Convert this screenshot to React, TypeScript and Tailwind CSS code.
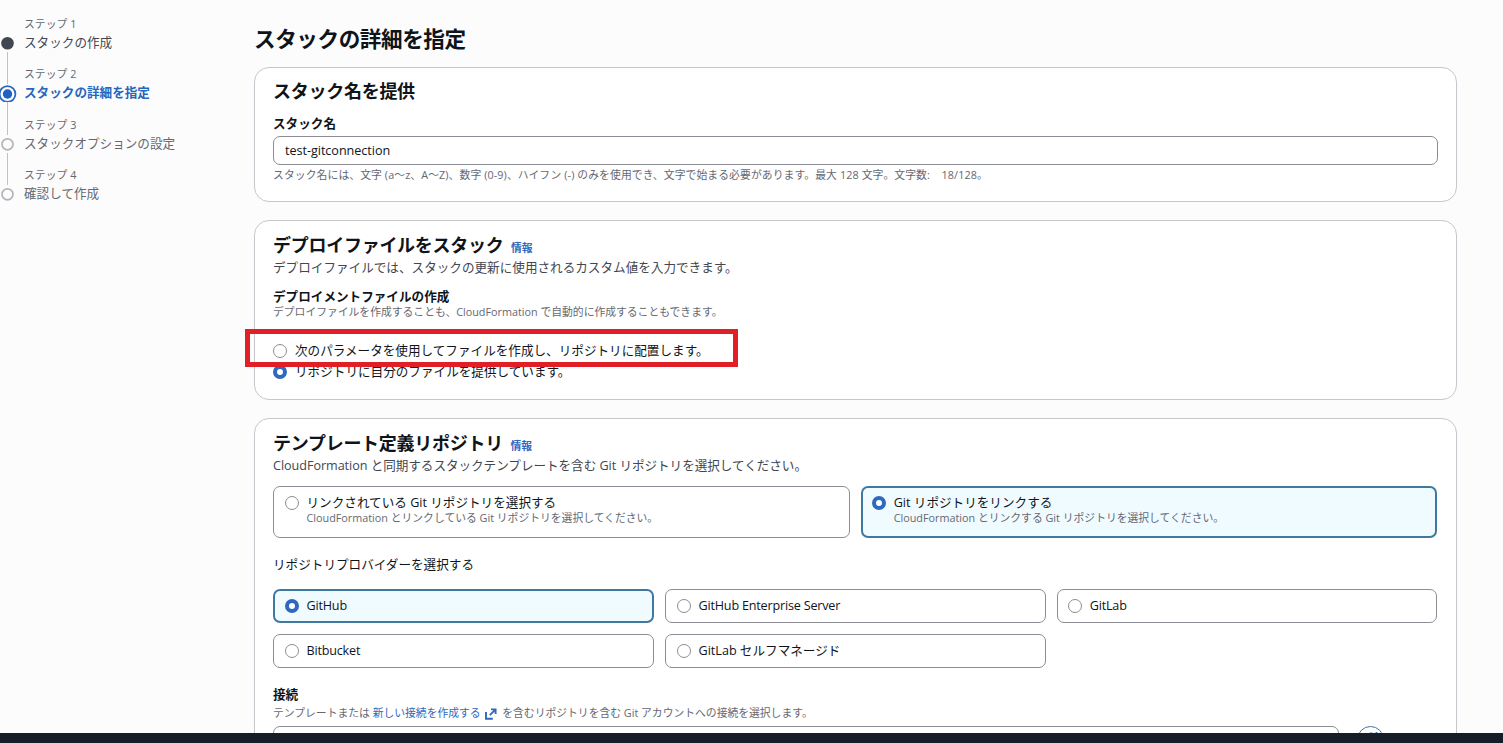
import type { ReactNode } from "react";

function Radio({ checked = false }: { checked?: boolean }) {
  return checked ? (
    <span className="size-[14px] shrink-0 rounded-full border-[4px] border-[#2f69bd] bg-white" />
  ) : (
    <span className="size-[14px] shrink-0 rounded-full border border-[#8c8c94] bg-white" />
  );
}

function Card({ className, children }: { className: string; children: ReactNode }) {
  return (
    <section className={`w-[1203px] shrink-0 rounded-[15px] border border-[#c6c6cd] bg-white pl-[18px] pr-[18px] ${className}`}>
      {children}
    </section>
  );
}

function Title({ children, info = false }: { children: ReactNode; info?: boolean }) {
  return (
    <div className="flex h-[22px] items-baseline gap-[7.5px]">
      <h2 className="text-[18px] font-bold leading-[22px] tracking-[-0.015em]">{children}</h2>
      {info && (
        <a href="#" className="text-[10.8px] font-bold leading-[14px] text-[#2f69bd]">
          情報
        </a>
      )}
    </div>
  );
}

function Hint({ children, className = "" }: { children: ReactNode; className?: string }) {
  return <p className={`text-[10.8px] leading-[14px] text-[#656871] ${className}`}>{children}</p>;
}

type TileProps = { label: string; hint?: string; checked?: boolean; latin?: boolean; tight?: boolean };

function Tile({ label, hint, checked = false, latin = false, tight = false }: TileProps) {
  return (
    <label
      className={
        checked
          ? "block rounded-[7px] border-2 border-[#3f799f] bg-[#f0fbff] pl-[9.5px] pt-[6px]"
          : "block rounded-[7px] border border-[#8c8c94] bg-white pl-[10.5px] pt-[7px]"
      }
    >
      <span className={tight ? "-ml-[0.8px] flex items-start gap-[8px]" : "flex items-start gap-[8px]"}>
        <span className="flex pt-[2px]">
          <Radio checked={checked} />
        </span>
        <span className="block">
          <span className={latin ? "block leading-[18px] tracking-[-0.19px]" : "block leading-[18px]"}>{label}</span>
          {hint && <Hint className="-mt-px">{hint}</Hint>}
        </span>
      </span>
    </label>
  );
}

const steps = [
  { title: "スタックの作成", state: "done" },
  { title: "スタックの詳細を指定", state: "active" },
  { title: "スタックオプションの設定", state: "next" },
  { title: "確認して作成", state: "next" },
];

function StepMarker({ state }: { state: string }) {
  return (
    <svg className="block size-[18px] shrink-0" viewBox="0 0 18 18" fill="none">
      {state === "done" && <circle cx="8.5" cy="9.3" r="6.3" fill="#424650" />}
      {state === "active" && (
        <>
          <circle cx="8.5" cy="10" r="7.9" stroke="#2f69bd" strokeWidth="1.8" />
          <circle cx="8.5" cy="10" r="4.7" fill="#1f61c4" />
        </>
      )}
      {state === "next" && <circle cx="8.5" cy="9.3" r="5.5" stroke="#b4b4bb" strokeWidth="1.7" />}
    </svg>
  );
}

function Steps() {
  return (
    <ol className="w-[254px] shrink-0 pt-[17px]">
      {steps.map((step, i) => (
        <li key={step.title} className="flex h-[50.3px]">
          <div className="-ml-[2px] flex w-[19px] shrink-0 flex-col items-center pt-[17px]">
            <StepMarker state={step.state} />
            {i < steps.length - 1 && <div className="-mb-[17px] w-px flex-1 bg-[#c0c0c7]" />}
          </div>
          <div className="pl-[7px]">
            <div className="text-[10.8px] leading-[14px] tracking-[0.005em] text-[#656871]">ステップ {i + 1}</div>
            <div
              className={
                step.state === "active"
                  ? "mt-[3px] font-bold leading-[18px] text-[#2467bd]"
                  : step.state === "done"
                    ? "mt-[3px] leading-[18px] text-[#424650]"
                    : "mt-[3px] leading-[18px] text-[#656871]"
              }
            >
              {step.title}
            </div>
          </div>
        </li>
      ))}
    </ol>
  );
}

export default function App() {
  return (
    <div className="flex h-[743px] w-[1503px] flex-col overflow-hidden bg-[#fcfcfd] font-['Open_Sans','Noto_Sans_CJK_JP',sans-serif] text-[12.6px] text-[#0f141a]" lang="ja">
      <div className="flex h-[733px] shrink-0 overflow-hidden">
        <Steps />
        <main className="flex flex-col gap-[18px]">
          <h1 className="-mb-[18px] h-[67px] shrink-0 pt-[25px] text-[21.6px] font-bold leading-[27px] tracking-[-0.02em]">
            スタックの詳細を指定
          </h1>

          <Card className="h-[135px] pt-[12px]">
            <Title>スタック名を提供</Title>
            <div className="mt-[13px] font-bold leading-[18px]">スタック名</div>
            <input
              className="mt-[3px] block h-[29px] w-full rounded-[7px] border border-[#8c8c94] bg-white px-[11px] tracking-[-0.03px]"
              defaultValue="test-gitconnection"
            />
            <Hint className="mt-[3px] tracking-[0.1px]">
              スタック名には、文字 (a～z、A～Z)、数字 (0-9)、ハイフン (-) のみを使用でき、文字で始まる必要があります。最大 128
              文字。文字数:&nbsp;&nbsp;&nbsp; 18/128。
            </Hint>
          </Card>

          <Card className="h-[180px] pt-[13px]">
            <Title info>デプロイファイルをスタック</Title>
            <p className="mt-[3px] leading-[18px] text-[#424650]">
              デプロイファイルでは、スタックの更新に使用されるカスタム値を入力できます。
            </p>
            <div className="mt-[11px] font-bold leading-[18px]">デプロイメントファイルの作成</div>
            <Hint className="-mt-px">デプロイファイルを作成することも、CloudFormation で自動的に作成することもできます。</Hint>
            <div className="relative mt-[23px] flex flex-col gap-[3px]">
              <label className="flex h-[18px] items-center gap-[8px] leading-[18px]">
                <Radio />
                次のパラメータを使用してファイルを作成し、リポジトリに配置します。
              </label>
              <label className="flex h-[18px] items-center gap-[8px] leading-[18px]">
                <Radio checked />
                リポジトリに自分のファイルを提供しています。
              </label>
              <div className="absolute -left-[28px] -top-[13px] h-[38px] w-[493px] border-[5px] border-[#e01f26]" />
            </div>
          </Card>

          <Card className="h-[400px] pt-[13px]">
            <Title info>テンプレート定義リポジトリ</Title>
            <p className="mt-[3px] leading-[18px] tracking-[-0.04px] text-[#424650]">
              CloudFormation と同期するスタックテンプレートを含む Git リポジトリを選択してください。
            </p>
            <div className="mt-[11px] grid w-[1164px] auto-rows-[52px] grid-cols-[577px_576px] gap-[11px]">
              <Tile label="リンクされている Git リポジトリを選択する" hint="CloudFormation とリンクしている Git リポジトリを選択してください。" />
              <Tile checked tight label="Git リポジトリをリンクする" hint="CloudFormation とリンクする Git リポジトリを選択してください。" />
            </div>
            <div className="mt-[18px] leading-[18px]">リポジトリプロバイダーを選択する</div>
            <div className="mt-[15px] grid w-[1164px] auto-rows-[34px] grid-cols-[381px_381px_380px] gap-[11px]">
              <Tile latin checked label="GitHub" />
              <Tile latin label="GitHub Enterprise Server" />
              <Tile latin tight label="GitLab" />
              <Tile latin label="Bitbucket" />
              <Tile label="GitLab セルフマネージド" />
            </div>
            <div className="mt-[18px] font-bold leading-[18px]">接続</div>
            <Hint className="mt-[2px]">
              テンプレートまたは{" "}
              <a href="#" className="text-[#2f69bd]">
                新しい接続を作成する{" "}
                <svg className="mx-[2px] inline-block size-[12px] align-[-3px]" viewBox="0 0 12 12" fill="none" stroke="currentColor" strokeWidth="1.9">
                  <path d="M1 4v6.8H7.8" />
                  <path d="M6 1.4h4.6V6M10.4 1.6 4.8 7.2" />
                </svg>
              </a>{" "}
              を含むリポジトリを含む Git アカウントへの接続を選択します。
            </Hint>
            <div className="mt-[6px] flex gap-[18px]">
              <div className="h-[29px] w-[1066px] rounded-[7px] border border-[#8c8c94]" />
              <button className="flex h-[27px] w-[27px] items-start justify-center rounded-full border-[1.5px] border-[#3f799f] pt-[5px]">
                <svg className="size-[14px]" viewBox="0 0 14 14" fill="none" stroke="#3f799f" strokeWidth="1.8">
                  <path d="M12 8a5 5 0 1 1-1.5-5.5M8.5 3.4h4V0" />
                </svg>
              </button>
            </div>
          </Card>
        </main>
      </div>
      <footer className="h-[10px] shrink-0 bg-[#161d26]" />
    </div>
  );
}
